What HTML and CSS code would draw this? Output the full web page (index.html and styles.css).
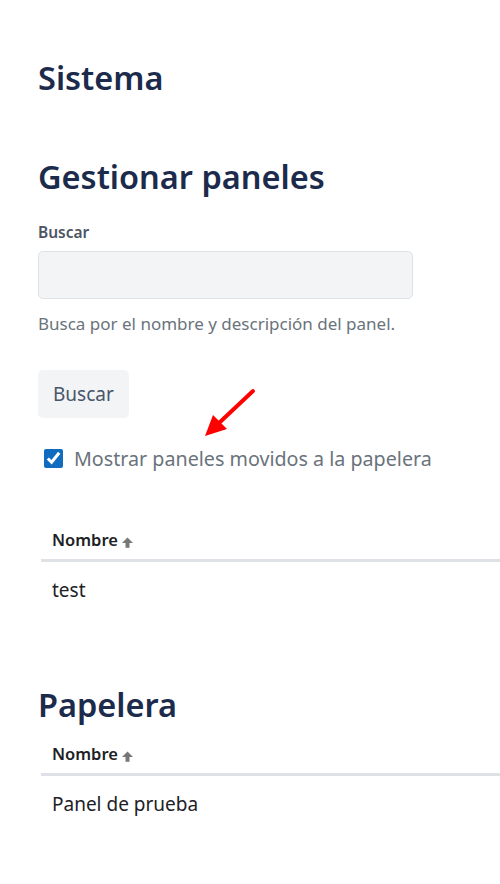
FILE: index.html
```html
<!DOCTYPE html>
<html lang="es">
<head>
    <meta charset="UTF-8">
    <meta name="viewport" content="width=device-width, initial-scale=1.0">
    <title>Gestionar paneles</title>
    <link rel="stylesheet" href="styles.css">
</head>
<body>
    <div class="page">
        <h2 class="heading heading-top">Sistema</h2>

        <h2 class="heading">Gestionar paneles</h2>
        <form class="search-form">
            <label class="field-label" for="search">Buscar</label>
            <input class="field-input" type="text" id="search">
            <div class="field-help">Busca por el nombre y descripción del panel.</div>
            <button class="btn" type="button">Buscar</button>
            <div class="check-row">
                <input type="checkbox" id="showTrash" checked>
                <label for="showTrash">Mostrar paneles movidos a la papelera</label>
                <svg class="pointer" width="60" height="56" viewBox="0 0 60 56">
                    <line x1="54" y1="5" x2="20" y2="37" stroke="#ff0000" stroke-width="4" stroke-linecap="round"/>
                    <polygon points="6,50 14,29 28,43" fill="#ff0000"/>
                </svg>
            </div>
        </form>

        <table class="list">
            <thead>
                <tr><th>Nombre <svg class="sort" width="11" height="11" viewBox="0 0 10 10"><polygon points="0,5.5 5,0.5 10,5.5"/><rect x="3.2" y="5" width="3.6" height="4.8"/></svg></th></tr>
            </thead>
            <tbody>
                <tr><td>test</td></tr>
            </tbody>
        </table>

        <h2 class="heading heading-trash">Papelera</h2>
        <table class="list list-trash">
            <thead>
                <tr><th>Nombre <svg class="sort" width="11" height="11" viewBox="0 0 10 10"><polygon points="0,5.5 5,0.5 10,5.5"/><rect x="3.2" y="5" width="3.6" height="4.8"/></svg></th></tr>
            </thead>
            <tbody>
                <tr><td>Panel de prueba</td></tr>
            </tbody>
        </table>
    </div>
</body>
</html>
```

FILE: styles.css
```css
body {
    margin: 0;
    font-family: 'Noto Sans', 'Open Sans', sans-serif;
    color: #1d2125;
    background: #fff;
    overflow-x: hidden;
}
.page {
    padding: 58px 0 40px 38px;
}
.heading {
    margin: 0;
    font-size: 32.5px;
    font-weight: 600;
    color: #1c2b4b;
    line-height: 1.2;
}
.heading-top {
    margin-bottom: 60px;
}
.heading-trash {
    margin-top: 69px;
}
.search-form {
    display: flex;
    flex-direction: column;
    align-items: flex-start;
    margin-top: 25px;
}
.field-label {
    font-size: 15.5px;
    font-weight: 600;
    color: #4d5562;
    margin-bottom: 8px;
}
.field-input {
    box-sizing: border-box;
    width: 375px;
    height: 48px;
    border: 1px solid #dee2e6;
    border-radius: 5px;
    background: #f3f4f6;
}
.field-help {
    margin-top: 13px;
    font-size: 17px;
    color: #6a737b;
}
.btn {
    margin-top: 35px;
    padding: 0 15px;
    height: 48px;
    font-family: inherit;
    font-size: 19px;
    color: #495569;
    background: #f3f4f6;
    border: none;
    border-radius: 5px;
}
.check-row {
    position: relative;
    display: flex;
    align-items: center;
    margin-top: 27px;
    padding-left: 6px;
    font-size: 19.7px;
    color: #6a737b;
}
.check-row input {
    width: 19px;
    height: 19px;
    margin: 0 11px 0 0;
    accent-color: #0f6cbf;
}
.pointer {
    position: absolute;
    left: 161px;
    top: -59px;
}
.list {
    margin: 46px 0 0 3px;
    width: calc(100% + 10px);
    border-collapse: collapse;
}
.list-trash {
    margin-top: 8px;
}
.list th {
    text-align: left;
    padding: 10px 11px 8px;
    font-size: 16.5px;
    font-weight: 600;
    color: #1d2125;
    border-bottom: 3px solid #dee2e6;
}
.list td {
    padding: 15px 11px 13px;
    font-size: 19px;
    color: #1d2125;
}
.sort {
    fill: #777;
    vertical-align: -2px;
}
```
